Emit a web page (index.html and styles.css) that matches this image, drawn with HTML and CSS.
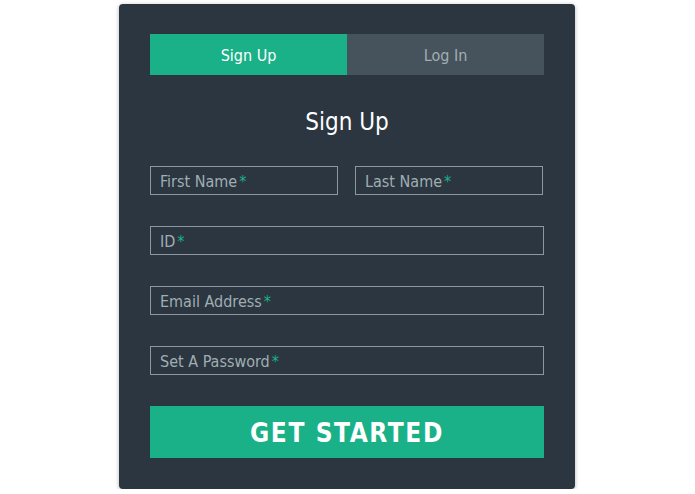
FILE: index.html
```html
<!DOCTYPE html>
<html>
<head>
<meta charset="utf-8">
<link rel="stylesheet" href="styles.css">
</head>
<body>
<div class="card">
  <div class="tabs">
    <div class="tab active">Sign Up</div>
    <div class="tab">Log In</div>
  </div>
  <h1 class="title">Sign Up</h1>
  <div class="form">
    <div class="row two">
      <div class="field"><span class="label">First Name<span class="req">*</span></span></div>
      <div class="field"><span class="label">Last Name<span class="req">*</span></span></div>
    </div>
    <div class="field"><span class="label">ID<span class="req">*</span></span></div>
    <div class="field"><span class="label">Email Address<span class="req">*</span></span></div>
    <div class="field"><span class="label">Set A Password<span class="req">*</span></span></div>
    <div class="button">GET STARTED</div>
  </div>
</div>
</body>
</html>
```
FILE: styles.css
```css
html, body {
  margin: 0;
  padding: 0;
  background: #ffffff;
}
body {
  font-family: "DejaVu Sans Condensed", "DejaVu Sans", sans-serif;
  padding: 4px 0 0 119px;
}
.card {
  width: 394px;
  height: 424px;
  padding: 30px 31px 31px 31px;
  background: #2b3641;
  border-radius: 4px;
  box-shadow: 0 1px 4px rgba(0, 0, 0, 0.3);
}
.tabs {
  display: grid;
  grid-template-columns: 197px 197px;
  height: 41px;
}
.tab {
  display: flex;
  align-items: center;
  justify-content: center;
  font-size: 16px;
  padding-top: 2px;
  background: #47535c;
  color: #a0aeb2;
}
.tab.active {
  background: #1ab188;
  color: #ffffff;
}
.title {
  margin: 32px 0 29px 0;
  height: 30px;
  line-height: 30px;
  text-align: center;
  font-size: 24px;
  font-weight: normal;
  color: #ffffff;
}
.form {
  display: flex;
  flex-direction: column;
  gap: 31px;
}
.row.two {
  display: grid;
  grid-template-columns: 188px 188px;
  column-gap: 17px;
}
.field {
  height: 25px;
  border: 1px solid #8c989e;
  display: flex;
  align-items: center;
  padding-left: 9px;
  padding-top: 2px;
}
.label {
  font-size: 16px;
  color: #a0aeb2;
}
.req {
  color: #1ab188;
  margin-left: 2px;
}
.button {
  height: 52px;
  padding-top: 2px;
  box-sizing: border-box;
  background: #1ab188;
  color: #ffffff;
  display: flex;
  align-items: center;
  justify-content: center;
  font-size: 26px;
  font-weight: bold;
  letter-spacing: 1.6px;
}
```
